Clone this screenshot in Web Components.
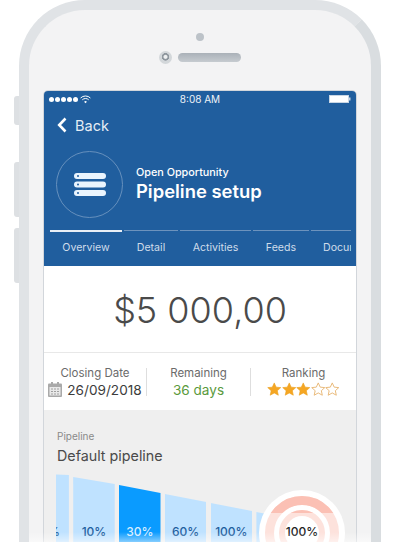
<!DOCTYPE html>
<html>
<head>
<meta charset="utf-8">
<title>Pipeline setup</title>
<style>
    html, body { margin: 0; height: 542px; overflow: hidden; background: #fff; }
    body { font-family: Inter, "Liberation Sans", sans-serif; }
</style>
</head>
<body>
<phone-frame>
    <status-bar></status-bar>
    <opp-header></opp-header>
    <tab-bar></tab-bar>
    <amount-block></amount-block>
    <stat-row></stat-row>
    <pipeline-chart></pipeline-chart>
</phone-frame>
<script>
class PhoneFrame extends HTMLElement {
    constructor() {
        super();
        this.attachShadow({ mode: 'open' });
        this.shadowRoot.innerHTML = `
            <style>
                :host {
                    display: block;
                    position: relative;
                    width: 362px;
                    margin-left: 19px;
                }
                .body {
                    box-sizing: border-box;
                    height: 700px;
                    padding: 0 14px;
                    border: 10px solid #e0e3e6;
                    border-right-color: #d9dde0;
                    border-radius: 66px;
                    background: #f3f3f4;
                }
                .sensors {
                    height: 80px;
                    display: grid;
                    grid-template-columns: 1fr;
                    justify-items: center;
                    align-content: start;
                    padding-top: 23px;
                    box-sizing: border-box;
                }
                .dot {
                    width: 8px;
                    height: 8px;
                    border-radius: 50%;
                    background: #bcc2c8;
                }
                .row {
                    display: flex;
                    align-items: center;
                    gap: 6px;
                    margin-top: 10px;
                    margin-left: -1px;
                }
                .cam {
                    width: 13px;
                    height: 13px;
                    border-radius: 50%;
                    background: radial-gradient(circle at 50% 45%, #eef0f1 0 1.5px, #8f979e 2.5px 3.5px, #d3d7da 4px);
                }
                .speaker {
                    width: 63px;
                    height: 9px;
                    border-radius: 5px;
                    background: linear-gradient(#aab1b8, #c6cbd0);
                }
                .screen {
                    height: 620px;
                    border: 1px solid #d2d6db;
                    border-radius: 5px 5px 0 0;
                    overflow: hidden;
                    background: #efefef;
                }
                .btn {
                    position: absolute;
                    left: -5px;
                    width: 5px;
                    background: #dde0e3;
                    border-radius: 3px 0 0 3px;
                }
                .fade {
                    position: absolute;
                    left: 10px;
                    right: 10px;
                    top: 532px;
                    height: 10px;
                    background: linear-gradient(rgba(255,255,255,0), rgba(255,255,255,0.5));
                }
            </style>
            <div class="btn" style="top:96px;height:29px"></div>
            <div class="btn" style="top:162px;height:55px"></div>
            <div class="btn" style="top:228px;height:55px"></div>
            <div class="body">
                <div class="sensors">
                    <div class="dot"></div>
                    <div class="row"><div class="cam"></div><div class="speaker"></div></div>
                </div>
                <div class="screen"><slot></slot></div>
            </div>
            <div class="fade"></div>
        `;
    }
}

class StatusBar extends HTMLElement {
    constructor() {
        super();
        this.attachShadow({ mode: 'open' });
        this.shadowRoot.innerHTML = `
            <style>
                :host {
                    display: grid;
                    grid-template-columns: 1fr auto 1fr;
                    align-items: center;
                    height: 16px;
                    padding: 0 5px 0 5px;
                    background: #205e9e;
                    color: #eef3f8;
                    font-size: 10px;
                }
                .left { display: flex; align-items: center; gap: 1px; }
                .left i {
                    width: 5px;
                    height: 5px;
                    border-radius: 50%;
                    background: #fff;
                }
                .left svg { margin-left: 1px; }
                .right { display: flex; justify-content: flex-end; }
            </style>
            <div class="left">
                <i></i><i></i><i></i><i></i><i></i>
                <svg width="11" height="9" viewBox="0 0 11 9" fill="none" stroke="#fff" stroke-width="1">
                    <path d="M.6 3a7 7 0 0 1 9.8 0"/>
                    <path d="M2.3 4.8a4.6 4.6 0 0 1 6.4 0"/>
                    <path d="M5.5 8.3l1.4-1.6a2 2 0 0 0-2.8 0z" fill="#fff" stroke="none"/>
                </svg>
            </div>
            <div>8:08 AM</div>
            <div class="right">
                <svg width="22" height="8" viewBox="0 0 22 8">
                    <rect x=".5" y=".5" width="19" height="7" fill="#fff" stroke="#c9d6e4"/>
                    <rect x="20" y="2.5" width="1.5" height="3" fill="#c9d6e4"/>
                </svg>
            </div>
        `;
    }
}

class OppHeader extends HTMLElement {
    constructor() {
        super();
        this.attachShadow({ mode: 'open' });
        this.shadowRoot.innerHTML = `
            <style>
                :host {
                    display: block;
                    background: #205e9e;
                    color: #fff;
                    padding-top: 6px;
                }
                .back {
                    display: flex;
                    align-items: center;
                    gap: 8px;
                    height: 24px;
                    padding-left: 13px;
                    font-size: 14.5px;
                    color: #e6edf5;
                }
                .info {
                    display: flex;
                    align-items: center;
                    gap: 13px;
                    margin-top: 14px;
                    padding-left: 12px;
                }
                .circle {
                    box-sizing: border-box;
                    width: 67px;
                    height: 67px;
                    border: 1.5px solid #6690bd;
                    border-radius: 50%;
                    display: flex;
                    align-items: center;
                    justify-content: center;
                }
                .sub { font-size: 10.8px; font-weight: 500; line-height: 14px; }
                .title { font-size: 18.4px; font-weight: 600; line-height: 23px; }
            </style>
            <div class="back">
                <svg width="10" height="16" viewBox="0 0 10 16" fill="none" stroke="#fff" stroke-width="2.6">
                    <path d="M8.5 1.5L2.2 8l6.3 6.5"/>
                </svg>
                <span>Back</span>
            </div>
            <div class="info">
                <div class="circle">
                    <svg width="32" height="24" viewBox="0 0 32 24">
                        <rect y="0" width="32" height="6" rx="3" fill="#eaf4fd"/>
                        <rect y="8.5" width="32" height="6" rx="3" fill="#eaf4fd"/>
                        <rect y="17" width="32" height="6" rx="3" fill="#eaf4fd"/>
                        <circle cx="4" cy="3" r="1" fill="#205e9e"/>
                        <circle cx="4" cy="11.5" r="1" fill="#205e9e"/>
                        <circle cx="4" cy="20" r="1" fill="#205e9e"/>
                    </svg>
                </div>
                <div>
                    <div class="sub">Open Opportunity</div>
                    <div class="title">Pipeline setup</div>
                </div>
            </div>
        `;
    }
}

class TabBar extends HTMLElement {
    constructor() {
        super();
        this.attachShadow({ mode: 'open' });
        this.shadowRoot.innerHTML = `
            <style>
                :host {
                    display: block;
                    height: 36px;
                    padding: 12px 5px 0 6px;
                    background: #205e9e;
                }
                .tabs {
                    display: flex;
                    gap: 2px;
                    overflow: hidden;
                    font-size: 10.6px;
                    color: #cfdcea;
                }
                .tab {
                    border-top: 1px solid #6d93bd;
                    padding-top: 10px;
                    height: 20px;
                    text-align: center;
                    white-space: nowrap;
                    overflow: hidden;
                    flex: none;
                }
                .tab.on {
                    border-top: 2px solid #e9eff6;
                    padding-top: 9px;
                }
            </style>
            <div class="tabs">
                <div class="tab on" style="width:72px">Overview</div>
                <div class="tab" style="width:54px">Detail</div>
                <div class="tab" style="width:71px">Activities</div>
                <div class="tab" style="width:56px">Feeds</div>
                <div class="tab" style="width:41px;text-align:left;text-indent:12px">Documents</div>
            </div>
        `;
    }
}

class AmountBlock extends HTMLElement {
    constructor() {
        super();
        this.attachShadow({ mode: 'open' });
        this.shadowRoot.innerHTML = `
            <style>
                :host {
                    display: flex;
                    align-items: center;
                    justify-content: center;
                    box-sizing: border-box;
                    height: 87px;
                    padding-top: 2px;
                    background: #fff;
                    border-bottom: 1px solid #e8e8e8;
                    color: #4a4a4a;
                    font-size: 36px;
                    font-weight: 300;
                }
            </style>
            <span>$5 000,00</span>
        `;
    }
}

class StatRow extends HTMLElement {
    constructor() {
        super();
        this.attachShadow({ mode: 'open' });
        const star = (on) => `<svg width="14.5" height="14.5" viewBox="0 0 24 24" fill="${on ? '#f5a623' : '#fff'}" stroke="${on ? '#eda01c' : '#e8b878'}" stroke-width="${on ? 1 : 1.6}"><path d="M12 1.5l3.2 7 7.6.8-5.7 5.1 1.6 7.5L12 18.1l-6.7 3.8 1.6-7.5L1.2 9.3l7.6-.8z"/></svg>`;
        this.shadowRoot.innerHTML = `
            <style>
                :host {
                    display: grid;
                    grid-template-columns: 103px 104px 1fr;
                    align-items: center;
                    height: 57px;
                    background: #fff;
                    text-align: center;
                }
                .cell {
                    height: 28px;
                    display: flex;
                    flex-direction: column;
                    align-items: center;
                    justify-content: center;
                    border-right: 1px solid #dedede;
                }
                .cell:last-child { border-right: none; }
                .label {
                    flex: none;
                    font-size: 11.5px;
                    line-height: 16px;
                    color: #6b6b6b;
                    white-space: nowrap;
                }
                .value {
                    flex: none;
                    display: flex;
                    align-items: center;
                    gap: 5px;
                    height: 18px;
                    font-size: 13.6px;
                    line-height: 18px;
                    color: #3c3c3c;
                    white-space: nowrap;
                }
                .green { color: #5a9a3c; }
                .stars { gap: 0; }
            </style>
            <div class="cell">
                <div class="label">Closing Date</div>
                <div class="value">
                    <svg width="14" height="15" viewBox="0 0 14 15">
                        <rect y="1.5" width="14" height="13.5" rx="1" fill="#a9a9a9"/>
                        <rect x="3" y="0" width="2" height="3" fill="#a9a9a9"/>
                        <rect x="9" y="0" width="2" height="3" fill="#a9a9a9"/>
                        <rect x="1.5" y="5" width="11" height="8.5" fill="#e9e9e9"/>
                        <path d="M3 7h2M6 7h2M9 7h2M3 9.5h2M6 9.5h2M9 9.5h2M3 12h2M6 12h2M9 12h2" stroke="#a0a0a0" stroke-width="1"/>
                    </svg>
                    <span>26/09/2018</span>
                </div>
            </div>
            <div class="cell">
                <div class="label">Remaining</div>
                <div class="value green">36 days</div>
            </div>
            <div class="cell">
                <div class="label">Ranking</div>
                <div class="value stars">${star(1)}${star(1)}${star(1)}${star(0)}${star(0)}</div>
            </div>
        `;
    }
}

class PipelineChart extends HTMLElement {
    constructor() {
        super();
        this.attachShadow({ mode: 'open' });
        // top offsets of each bar, left and right edge
        const bars = [
            ['5%', 0, 2],
            ['10%', 4, 11],
            ['30%', 12, 20, true],
            ['60%', 21, 29],
            ['100%', 30, 38],
            ['', 39, 47],
            ['', 48, 56]
        ];
        const barHtml = bars.map(([label, l, r, on], i) => `
            <div class="bar${on ? ' on' : ''}" style="clip-path: polygon(0 ${l}px, 100% ${r}px, 100% 100%, 0 100%)${i === 0 ? ';padding-left:4px' : ''}">${label}</div>
        `).join('');
        this.shadowRoot.innerHTML = `
            <style>
                :host {
                    display: block;
                    position: relative;
                    height: 300px;
                    padding: 19px 0 0 13px;
                    background: #efefef;
                    overflow: hidden;
                }
                .small { font-size: 10px; line-height: 14px; color: #8a8a8a; }
                .name { font-size: 14.3px; line-height: 20px; color: #4a4a4a; margin-top: 3px; }
                .clip { overflow: hidden; margin: 7px 0 0 -1px; height: 100px; }
                .bars { display: flex; gap: 4.3px; margin-left: -28.6px; }
                .bar {
                    flex: none;
                    box-sizing: border-box;
                    width: 41.5px;
                    height: 100px;
                    padding-top: 51px;
                    background: #bfe2ff;
                    color: #1f5f9e;
                    font-size: 12px;
                    font-weight: 500;
                    text-align: center;
                }
                .bar.on { background: #0a9bff; color: #d7edff; }
                .target { position: absolute; left: 213px; top: 78px; }
                .target text {
                    font-family: Inter, "Liberation Sans", sans-serif;
                    font-size: 12px;
                    font-weight: 500;
                    fill: #222;
                }
            </style>
            <div class="small">Pipeline</div>
            <div class="name">Default pipeline</div>
            <div class="clip"><div class="bars">${barHtml}</div></div>
            <svg class="target" width="90" height="90" viewBox="0 0 90 90">
                <defs>
                    <clipPath id="top"><rect width="90" height="25"/></clipPath>
                </defs>
                <circle cx="45" cy="45" r="43" fill="#fff"/>
                <circle cx="45" cy="45" r="32.5" fill="none" stroke="#fde2dc" stroke-width="9"/>
                <circle cx="45" cy="45" r="32.5" fill="none" stroke="#fbc0b4" stroke-width="9" clip-path="url(#top)"/>
                <circle cx="45" cy="45" r="20" fill="none" stroke="#fde2dc" stroke-width="6"/>
                <circle cx="45" cy="45" r="20" fill="none" stroke="#fbc0b4" stroke-width="6" clip-path="url(#top)"/>
                <text x="45" y="48" text-anchor="middle">100%</text>
            </svg>
        `;
    }
}

customElements.define('phone-frame', PhoneFrame);
customElements.define('status-bar', StatusBar);
customElements.define('opp-header', OppHeader);
customElements.define('tab-bar', TabBar);
customElements.define('amount-block', AmountBlock);
customElements.define('stat-row', StatRow);
customElements.define('pipeline-chart', PipelineChart);
</script>
</body>
</html>
